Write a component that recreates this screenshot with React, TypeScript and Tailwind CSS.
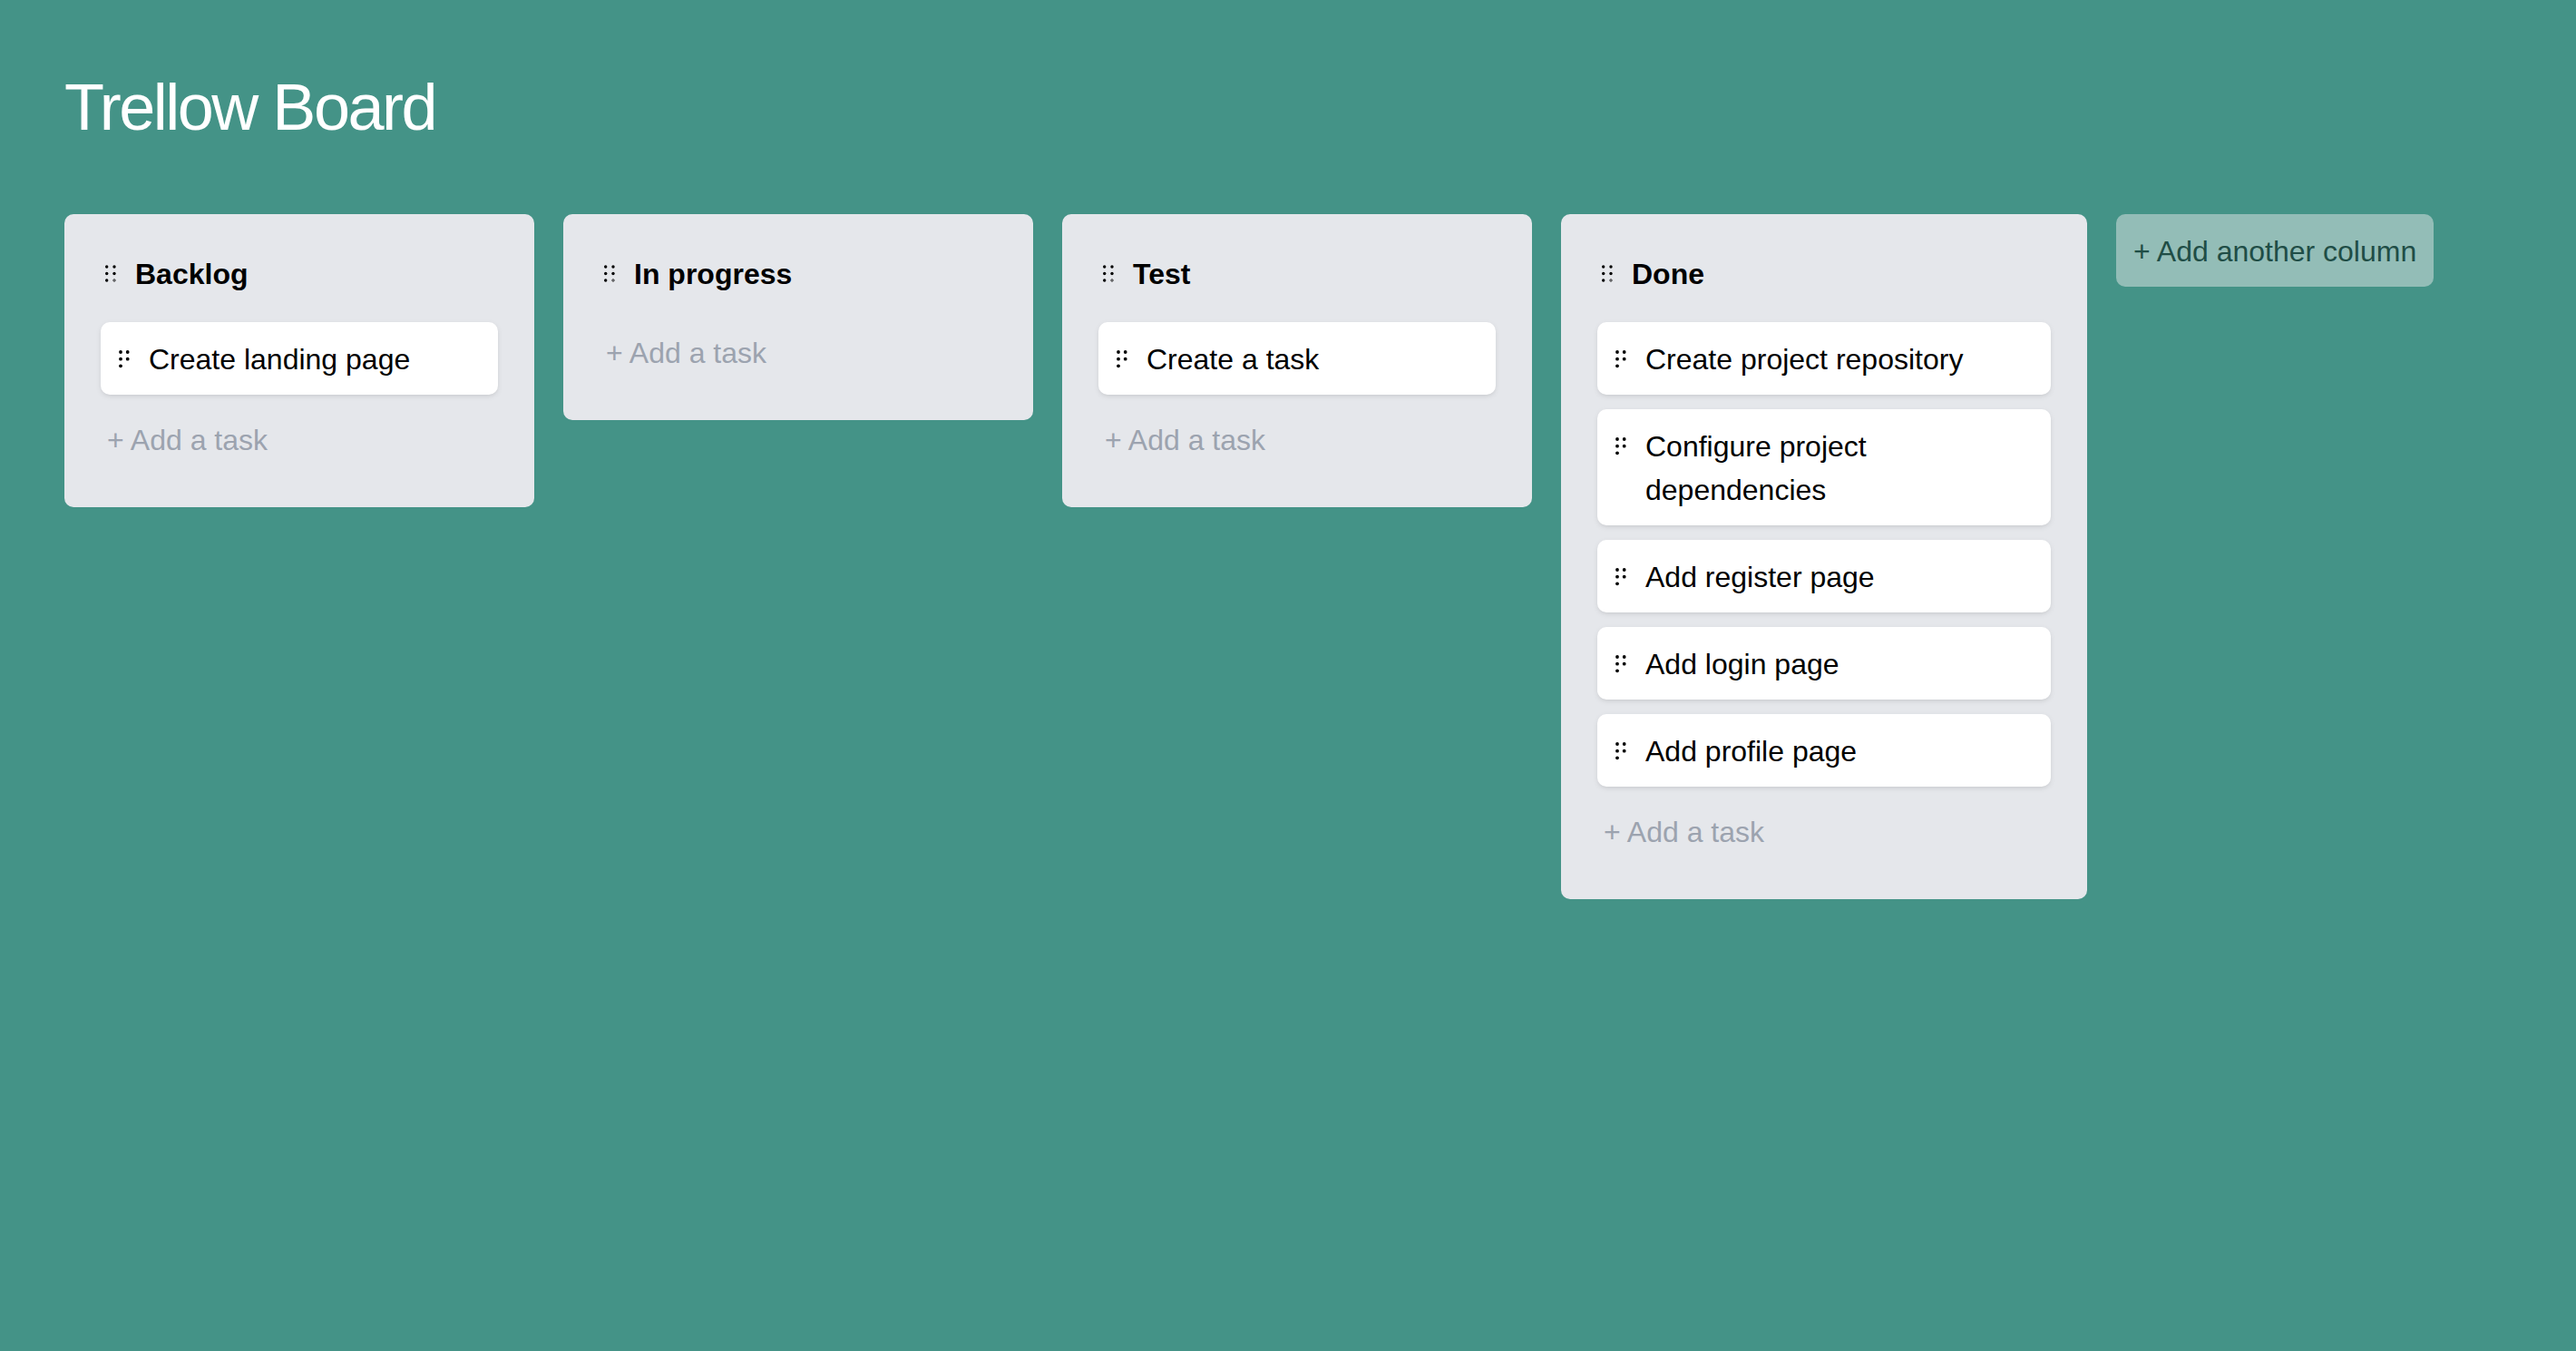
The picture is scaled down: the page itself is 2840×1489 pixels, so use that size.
import { FunctionComponent } from 'react';

type Column = {
    title: string;
    width: string;
    tasks: string[];
};

const columns: Column[] = [
    { title: 'Backlog', width: 'w-[518px]', tasks: ['Create landing page'] },
    { title: 'In progress', width: 'w-[518px]', tasks: [] },
    { title: 'Test', width: 'w-[518px]', tasks: ['Create a task'] },
    {
        title: 'Done',
        width: 'w-[580px]',
        tasks: [
            'Create project repository',
            'Configure project dependencies',
            'Add register page',
            'Add login page',
            'Add profile page',
        ],
    },
];

const ColumnGrip = () => (
    <svg width="20" height="48" viewBox="0 0 20 48" className="shrink-0">
        <circle cx="6.7" cy="16" r="1.7" fill="#000" />
        <circle cx="15" cy="16" r="1.7" fill="#000" />
        <circle cx="6.7" cy="23.5" r="1.7" fill="#000" />
        <circle cx="15" cy="23.5" r="1.7" fill="#000" />
        <circle cx="6.7" cy="31" r="1.7" fill="#000" />
        <circle cx="15" cy="31" r="1.2" fill="none" stroke="#000" strokeWidth="0.8" />
    </svg>
);

const TaskGrip = () => (
    <svg width="12" height="48" viewBox="0 0 12 48" className="shrink-0">
        <circle cx="2" cy="16" r="1.9" fill="#000" />
        <circle cx="9.7" cy="16" r="1.9" fill="#000" />
        <circle cx="2" cy="23.7" r="1.9" fill="#000" />
        <circle cx="9.7" cy="23.7" r="1.9" fill="#000" />
        <circle cx="2" cy="31.3" r="1.9" fill="#000" />
    </svg>
);

const App: FunctionComponent = () => {
    return (
        <div className="min-h-screen bg-[#449387] pl-[71px] pt-[78px] font-['Liberation_Sans',Arial,sans-serif]">
            <h1 className="text-[72px] leading-[80px] tracking-[-2.5px] text-white mb-[78px]">Trellow Board</h1>
            <div className="flex items-start gap-[32px]">
                {columns.map((col) => (
                    <div key={col.title} className={`${col.width} shrink-0 bg-[#e5e7eb] rounded-[10px] px-[40px] pt-[42px] pb-[42px]`}>
                        <div className="flex items-start gap-[18px] mb-[29px]">
                            <ColumnGrip />
                            <h2 className="text-[32px] leading-[48px] font-bold text-black">{col.title}</h2>
                        </div>
                        <div className="flex flex-col gap-[16px]">
                            {col.tasks.map((task) => (
                                <div
                                    key={task}
                                    className="flex items-start gap-[21px] bg-white rounded-[10px] pl-[20px] pr-[24px] pt-[17px] pb-[15px] shadow-[0_2px_6px_0_rgba(0,0,0,0.08),0_2px_4px_-2px_rgba(0,0,0,0.08)]"
                                >
                                    <TaskGrip />
                                    <p className="text-[32px] leading-[48px] text-black">{task}</p>
                                </div>
                            ))}
                            <button className="text-left pl-[7px] pt-[10px] pb-[8px] text-[32px] leading-[48px] text-[#9ca3af]">+ Add a task</button>
                        </div>
                    </div>
                ))}
                <button className="shrink-0 bg-[#93bdb7] rounded-[10px] px-[19px] pt-[17px] pb-[15px] text-[32px] leading-[48px] text-[#1f4d46]">
                    + Add another column
                </button>
            </div>
        </div>
    );
};

export default App;
